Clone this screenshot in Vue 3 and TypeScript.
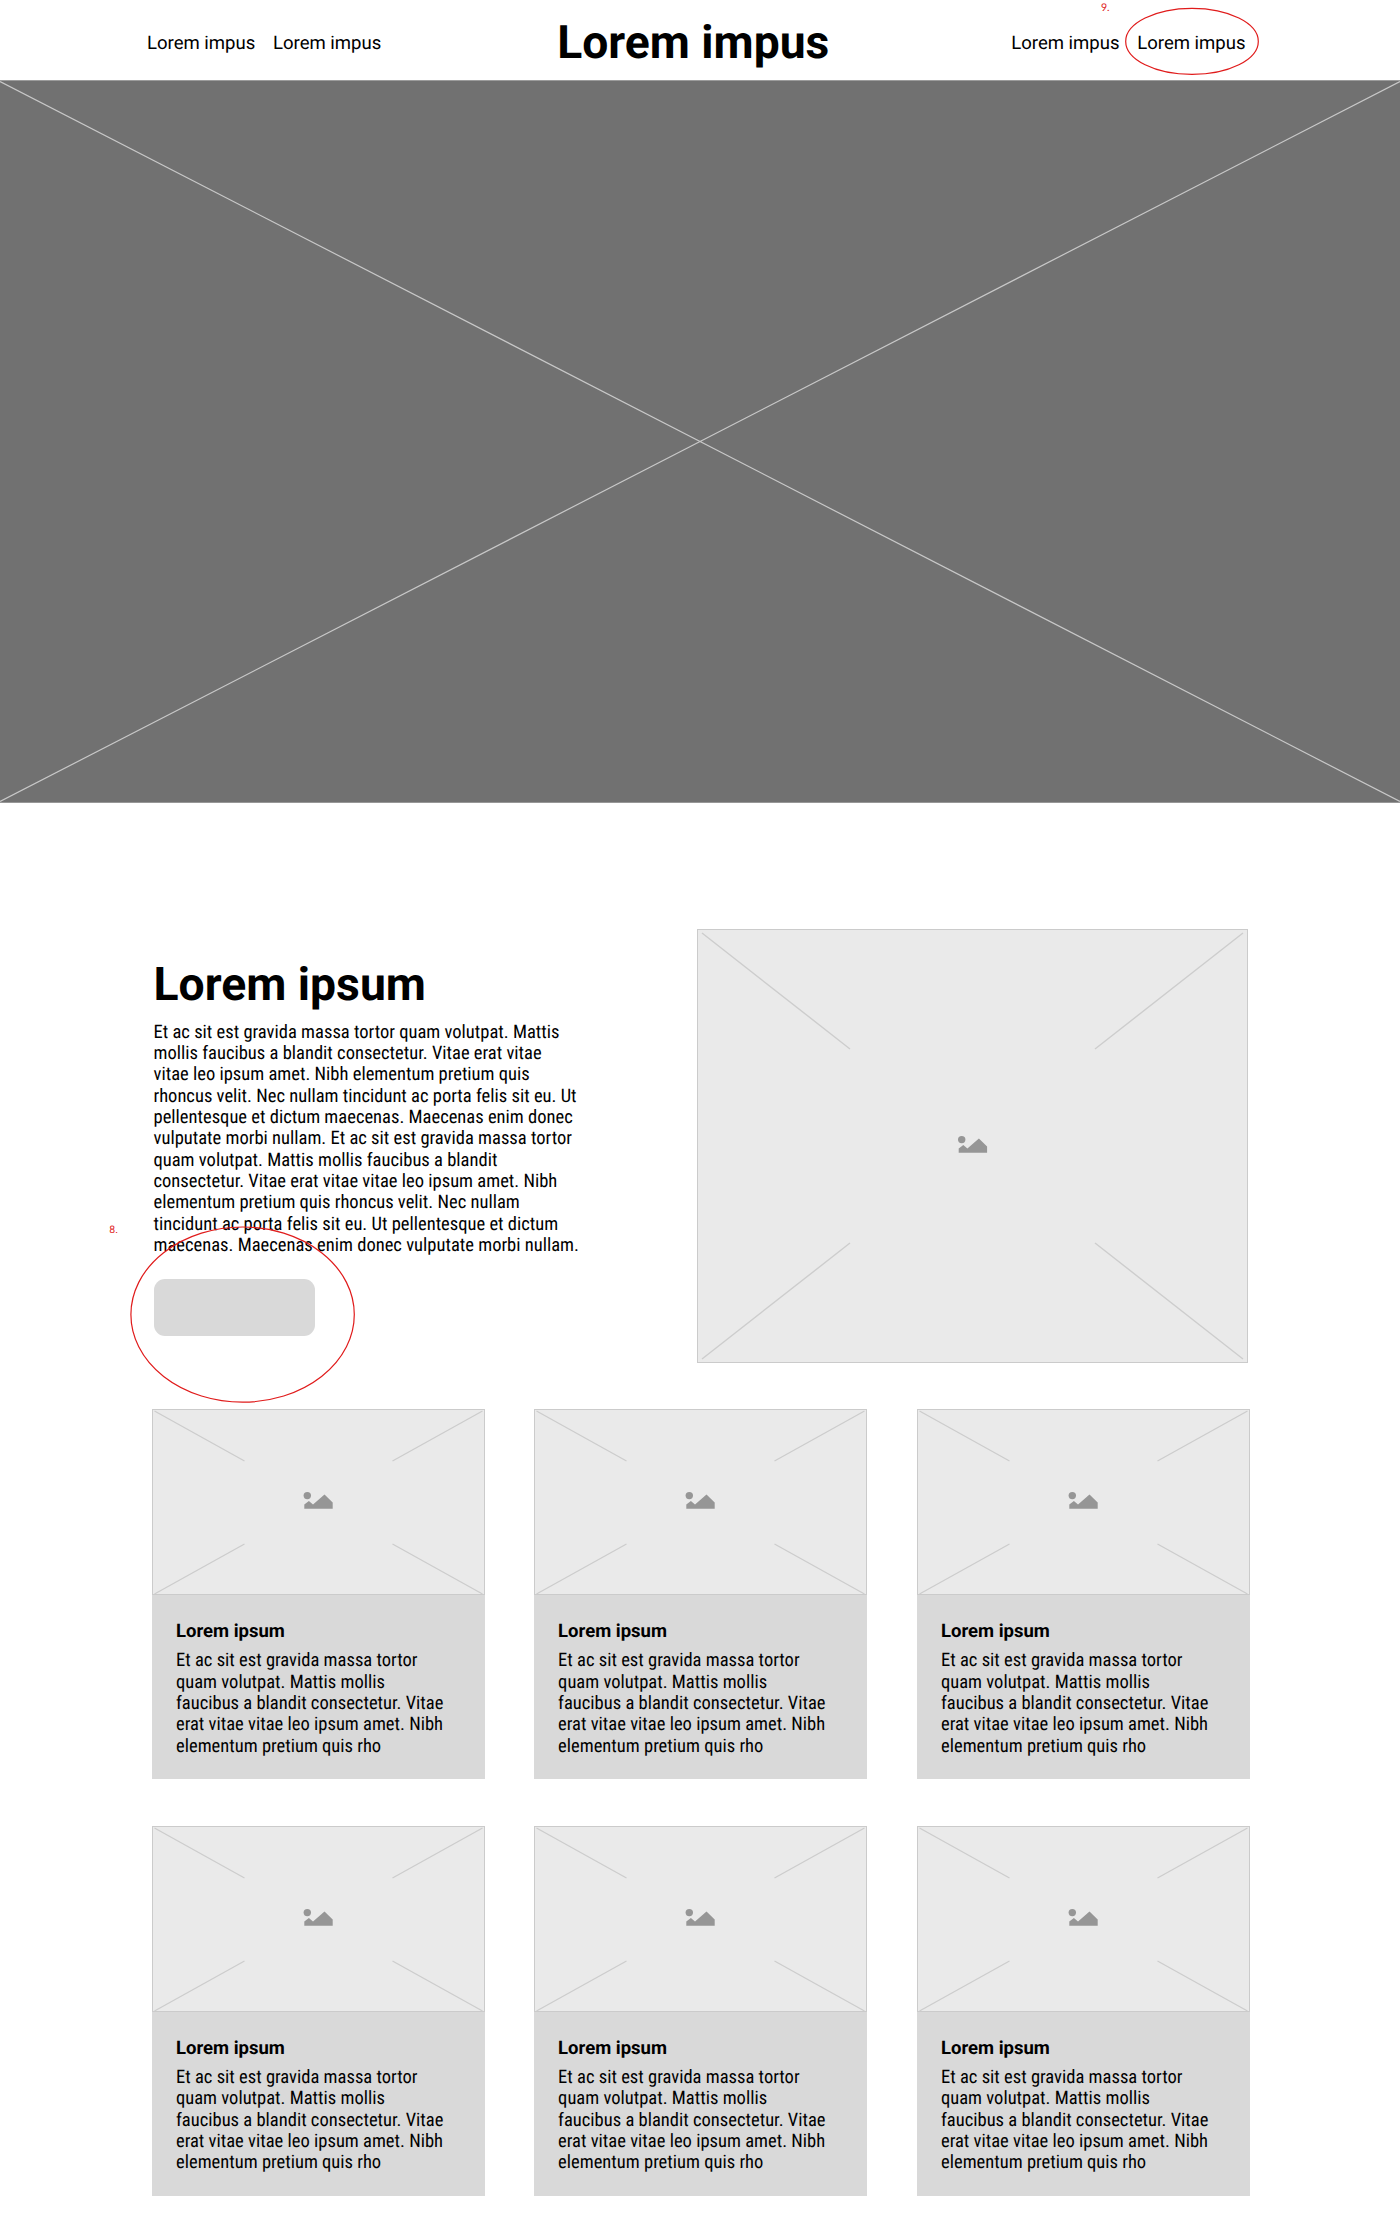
<script setup lang="ts">
const introLines: string[] = [
  'Et ac sit est gravida massa tortor quam volutpat. Mattis',
  'mollis faucibus a blandit consectetur. Vitae erat vitae',
  'vitae leo ipsum amet. Nibh elementum pretium quis',
  'rhoncus velit. Nec nullam tincidunt ac porta felis sit eu. Ut',
  'pellentesque et dictum maecenas. Maecenas enim donec',
  'vulputate morbi nullam. Et ac sit est gravida massa tortor',
  'quam volutpat. Mattis mollis faucibus a blandit',
  'consectetur. Vitae erat vitae vitae leo ipsum amet. Nibh',
  'elementum pretium quis rhoncus velit. Nec nullam',
  'tincidunt ac porta felis sit eu. Ut pellentesque et dictum',
  'maecenas. Maecenas enim donec vulputate morbi nullam.',
]

const cardLines: string[] = [
  'Et ac sit est gravida massa tortor',
  'quam volutpat. Mattis mollis',
  'faucibus a blandit consectetur. Vitae',
  'erat vitae vitae leo ipsum amet. Nibh',
  'elementum pretium quis rho',
]

const cards: { id: number; title: string }[] = Array.from({ length: 6 }, (_, i) => ({
  id: i + 1,
  title: 'Lorem ipsum',
}))
</script>

<template>
  <div class="page">
    <header class="header">
      <nav class="nav">
        <a>Lorem impus</a>
        <a>Lorem impus</a>
      </nav>
      <div class="brand">Lorem impus</div>
      <nav class="nav nav-right">
        <a>Lorem impus</a>
        <a>Lorem impus</a>
      </nav>
    </header>

    <section class="hero">
      <svg viewBox="0 0 1400 722" preserveAspectRatio="none">
        <path d="M0 0.5L1400 721.5M0 721.5L1400 0.5" />
      </svg>
    </section>

    <main class="content">
      <section class="intro">
        <div class="intro-text">
          <h1>Lorem ipsum</h1>
          <p class="copy">
            <span v-for="line in introLines" :key="line">{{ line }}</span>
          </p>
          <button class="button" type="button" aria-label="Action"></button>
        </div>
        <svg class="frame" width="551" height="434" viewBox="0 0 551 434">
          <rect x="0.5" y="0.5" width="550" height="433" />
          <path class="rays" d="M5 4L153 120M546 4L398 120M5 430L153 314M546 430L398 314" />
          <g class="glyph" transform="translate(275.7 217)">
            <circle cx="-11" cy="-6.4" r="3.7" />
            <path d="M-14 6.8V2.6L-9.4 -0.9L-5.3 2.6L6.2 -7.6L14.4 0.6V6.8Z" />
          </g>
        </svg>
      </section>

      <section class="cards">
        <article v-for="card in cards" :key="card.id" class="card">
          <svg class="frame" width="333" height="186" viewBox="0 0 333 186">
            <rect x="0.5" y="0.5" width="332" height="185" />
            <path class="rays" d="M2.5 2L92.5 52M330.5 2L240.5 52M2.5 185L92.5 135M330.5 185L240.5 135" />
            <g class="glyph" transform="translate(166.3 93)">
              <circle cx="-11" cy="-6.4" r="3.7" />
              <path d="M-14 6.8V2.6L-9.4 -0.9L-5.3 2.6L6.2 -7.6L14.4 0.6V6.8Z" />
            </g>
          </svg>
          <div class="card-body">
            <h2>{{ card.title }}</h2>
            <p class="copy">
              <span v-for="line in cardLines" :key="line">{{ line }}</span>
            </p>
          </div>
        </article>
      </section>
    </main>

    <svg class="notes" width="1400" height="2232" viewBox="0 0 1400 2232">
      <ellipse cx="1192" cy="41.4" rx="66.3" ry="33" />
      <ellipse cx="242.6" cy="1314.6" rx="111.7" ry="87.6" />
      <text class="note-nine" x="1101" y="11.3">9.</text>
      <text class="note-eight" x="109.3" y="1233">8.</text>
    </svg>
  </div>
</template>

<style>
body {
  margin: 0;
  background: #fff;
}
</style>

<style scoped>
.page {
  position: relative;
  width: 1400px;
  height: 2232px;
  overflow: hidden;
  background: #fff;
  color: #000;
  font-family: Roboto, "Liberation Sans", sans-serif;
  text-rendering: geometricPrecision;
}

.header {
  display: flex;
  justify-content: space-between;
  align-items: center;
  box-sizing: border-box;
  height: 80px;
  padding: 6px 154.5px 0 147px;
}

.nav {
  display: flex;
  gap: 17.7px;
  width: 238px;
  font-size: 18.55px;
  line-height: 22px;
  white-space: nowrap;
}

.nav-right {
  justify-content: flex-end;
}

.brand {
  position: relative;
  left: -3px;
  font-size: 46.25px;
  font-weight: 700;
  line-height: 54px;
  white-space: nowrap;
}

.hero {
  box-sizing: border-box;
  height: 723px;
  border-top: 1px solid #9c9c9c;
  border-bottom: 1px solid #979797;
  background: #717171;
}

.hero svg {
  display: block;
  width: 100%;
  height: 100%;
}

.hero path {
  fill: none;
  stroke: #c8c8c8;
  stroke-width: 1.2;
}

.content {
  padding: 126px 150px 0 152px;
}

.intro {
  display: flex;
  justify-content: space-between;
  padding: 0 2px 0 1.5px;
}

.intro-text {
  padding-top: 29px;
}

h1 {
  margin: 0;
  font-size: 46.3px;
  font-weight: 700;
  line-height: 54px;
}

.copy {
  margin: 0;
  font-family: "Roboto Condensed", Roboto, sans-serif;
  font-stretch: 75%;
  font-size: 18.55px;
  line-height: 21.33px;
  white-space: nowrap;
}

.copy span {
  display: block;
}

.intro .copy {
  margin-top: 9.8px;
}

.button {
  display: block;
  width: 161px;
  height: 57px;
  margin: 22.6px 0 0 0.5px;
  padding: 0;
  border: 0;
  border-radius: 11px;
  background: #d9d9d9;
}

.frame {
  display: block;
  flex: none;
}

.frame rect {
  fill: #eaeaea;
  stroke: #cbcbcb;
}

.rays {
  fill: none;
  stroke: #cdcdcd;
  stroke-width: 1.4;
}

.glyph {
  fill: #969696;
}

.cards {
  display: grid;
  grid-template-columns: repeat(3, 333px);
  justify-content: space-between;
  row-gap: 46.5px;
  margin-top: 46px;
}

.card {
  height: 370.2px;
  background: #d9d9d9;
}

.card:nth-child(3n + 2) {
  margin-left: -0.4px;
  margin-right: 0.4px;
}

.card-body {
  padding: 25.2px 24px 0;
}

h2 {
  margin: 0;
  font-size: 18.5px;
  font-weight: 700;
  line-height: 22px;
}

.card .copy {
  margin-top: 8.2px;
}

.notes {
  position: absolute;
  top: 0;
  left: 0;
  pointer-events: none;
}

.notes ellipse {
  fill: none;
  stroke: #e01b1b;
  stroke-width: 1.2;
}

.notes text {
  fill: #e01b1b;
  font-size: 10.5px;
}

.note-nine {
  font-family: Lato, sans-serif;
}

.note-eight {
  font-family: Roboto, sans-serif;
}
</style>
